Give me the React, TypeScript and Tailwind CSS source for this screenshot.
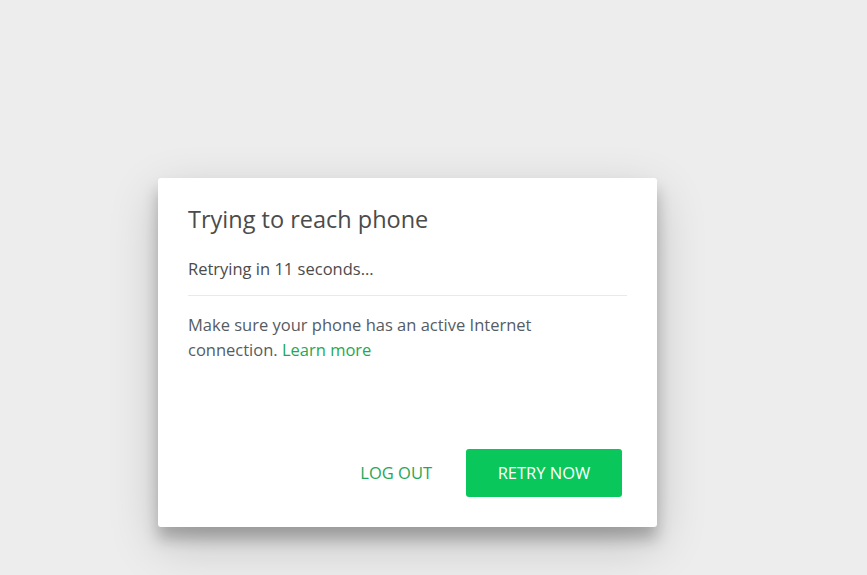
export default function App() {
  return (
    <div
      className="w-[867px] h-[575px] bg-[#ededed] flex flex-col items-start pl-[158px] pt-[178px]"
      style={{ fontFamily: '"Open Sans", "Noto Sans", sans-serif' }}
    >
      <div className="w-[499px] h-[349px] bg-white rounded-[3px] shadow-[0_17px_50px_0_rgba(0,0,0,0.19),0_12px_15px_0_rgba(0,0,0,0.24)] flex flex-col">
        <div className="px-[30px] pt-[26px] flex flex-col">
          <div className="text-[23.5px] leading-[30px] text-[#4b4b4b]">Trying to reach phone</div>
          <div className="mt-[24px] text-[16.5px] leading-[22px] text-[#4b4b4b]">Retrying in 11 seconds...</div>
          <div className="mt-[15px] h-px bg-[#e9e9e9]" />
          <div className="mt-[16px] text-[16.5px] leading-[25px] text-[#555c63] w-[375px]">
            Make sure your phone has an active Internet connection.{" "}
            <a className="text-[#1fa855]">Learn more</a>
          </div>
        </div>
        <div className="mt-auto flex justify-end items-center gap-[34px] pr-[35px] pb-[30px]">
          <button className="text-[16.5px] text-[#1fa855] uppercase">Log out</button>
          <button className="w-[156px] h-[48px] rounded-[3px] bg-[#09c75b] text-white text-[16.5px] uppercase">
            Retry now
          </button>
        </div>
      </div>
    </div>
  );
}
